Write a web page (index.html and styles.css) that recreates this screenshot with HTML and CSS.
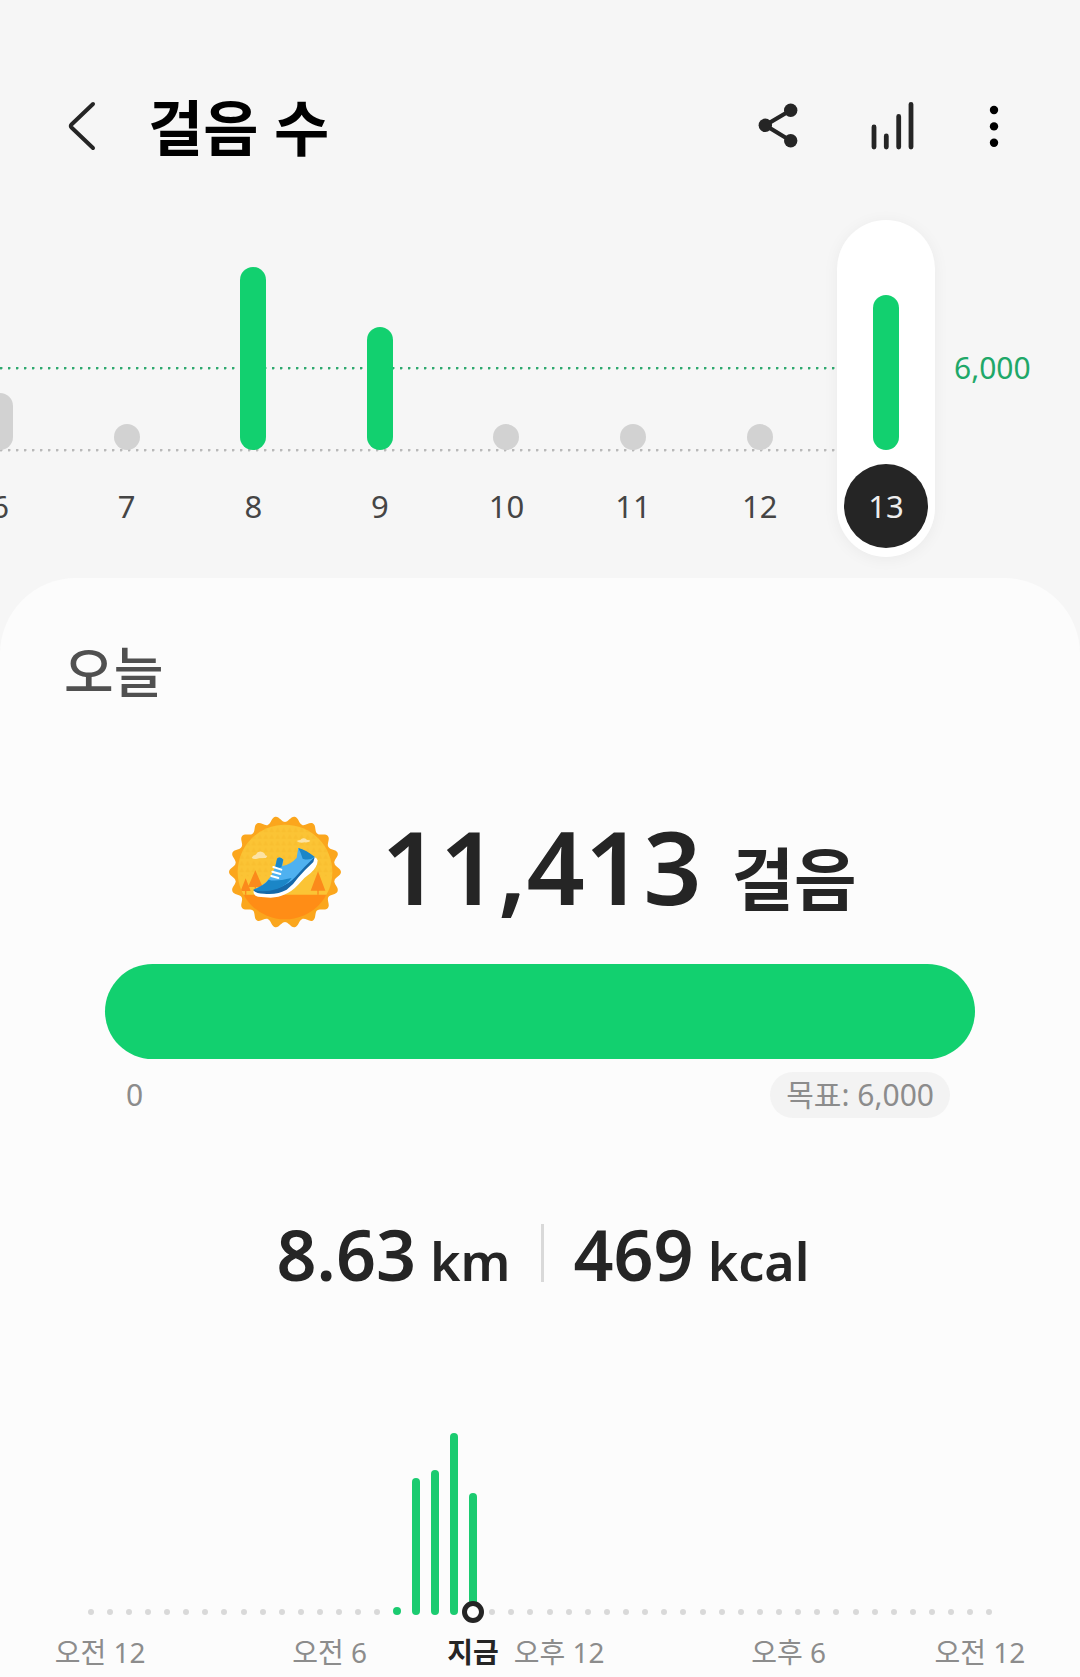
FILE: index.html
```html
<!DOCTYPE html>
<html lang="ko">
<head>
<meta charset="utf-8">
<meta name="viewport" content="width=device-width, initial-scale=1">
<title>걸음 수</title>
<link rel="stylesheet" href="styles.css">
</head>
<body>
<header class="topbar">
  <button class="icon-btn" type="button" aria-label="뒤로">
    <svg width="64" height="64" viewBox="0 0 64 64" fill="none" stroke="#252525" stroke-width="4" stroke-linecap="round" stroke-linejoin="round"><path d="M43 10 21.500 30.500Q20 32 21.500 33.500L43 54"/></svg>
  </button>
  <h1 class="title">걸음 수</h1>
  <nav class="actions">
    <button class="icon-btn" type="button" aria-label="공유">
      <svg width="64" height="64" viewBox="0 0 64 64" fill="#252525"><path d="M46.700 16.300 21.300 31.300 46.700 46.700" fill="none" stroke="#252525" stroke-width="4.200"/><circle cx="46.700" cy="16.300" r="6.700"/><circle cx="21.300" cy="31.300" r="6.700"/><circle cx="46.700" cy="46.700" r="6.700"/></svg>
    </button>
    <button class="icon-btn" type="button" aria-label="통계">
      <svg width="64" height="64" viewBox="0 0 64 64" fill="none" stroke="#252525" stroke-width="4.800" stroke-linecap="round"><path d="M16 33v20M28.300 42v11M40.700 22.500V53M53 10.300V53"/></svg>
    </button>
    <button class="icon-btn narrow" type="button" aria-label="더보기">
      <svg width="44" height="64" viewBox="0 0 44 64"><circle cx="22" cy="16" r="4.200"/><circle cx="22" cy="32.400" r="4.200"/><circle cx="22" cy="48.700" r="4.200"/></svg>
    </button>
  </nav>
</header>

<section class="week" aria-label="일별 걸음 수">
  <div class="strip">
    <div class="guide target"></div>
    <div class="guide base"></div>
    <ol class="days">
      <li class="day"><div class="plot"><span class="bar" style="height:57px"></span></div><span class="date">6</span></li>
      <li class="day"><div class="plot"><span class="bar" style="height:26px"></span></div><span class="date">7</span></li>
      <li class="day"><div class="plot"><span class="bar met" style="height:183px"></span></div><span class="date">8</span></li>
      <li class="day"><div class="plot"><span class="bar met" style="height:123px"></span></div><span class="date">9</span></li>
      <li class="day"><div class="plot"><span class="bar" style="height:26px"></span></div><span class="date">10</span></li>
      <li class="day"><div class="plot"><span class="bar" style="height:26px"></span></div><span class="date">11</span></li>
      <li class="day"><div class="plot"><span class="bar" style="height:26px"></span></div><span class="date">12</span></li>
      <li class="day selected"><div class="plot"><span class="bar met" style="height:155px"></span></div><span class="date">13</span></li>
    </ol>
  </div>
  <span class="target-label">6,000</span>
</section>

<main class="card">
  <h2 class="today">오늘</h2>

  <div class="steps">
    <svg class="badge" viewBox="61 49 336 336" role="img" aria-label="목표 달성">
      <defs>
        <path id="tooth" d="M-9-40V-49.200C-5-49.900-4-56 0-56C4-56 5-49.900 9-49.200V-40Z"/>
        <pattern id="tri" width="18" height="20" patternUnits="userSpaceOnUse"><path d="M9 2 17 18H1Z" fill="#f8b92c" opacity=".5"/></pattern>
        <clipPath id="disc"><circle cx="229" cy="217" r="142"/></clipPath>
      </defs>
      <g transform="translate(229 217) scale(3)" fill="#fba61d">
        <circle r="49"/>
        <use href="#tooth" transform="rotate(10)"/><use href="#tooth" transform="rotate(30)"/><use href="#tooth" transform="rotate(50)"/>
        <use href="#tooth" transform="rotate(70)"/><use href="#tooth" transform="rotate(90)"/><use href="#tooth" transform="rotate(110)"/>
        <use href="#tooth" transform="rotate(130)"/><use href="#tooth" transform="rotate(150)"/><use href="#tooth" transform="rotate(170)"/>
        <use href="#tooth" transform="rotate(190)"/><use href="#tooth" transform="rotate(210)"/><use href="#tooth" transform="rotate(230)"/>
        <use href="#tooth" transform="rotate(250)"/><use href="#tooth" transform="rotate(270)"/><use href="#tooth" transform="rotate(290)"/>
        <use href="#tooth" transform="rotate(310)"/><use href="#tooth" transform="rotate(330)"/><use href="#tooth" transform="rotate(350)"/>
      </g>
      <g clip-path="url(#disc)">
        <path fill="#fbc435" d="M80 70h300v220H80z"/>
        <path fill="url(#tri)" d="M80 70h300v160H80z"/>
        <path fill="#ff8d16" d="M80 285h300v80H80z"/>
        <path fill="#fb8a1b" d="M140 212 162 262H142V285H138V262H118ZM111 236 126 274H113V285H109V274H96ZM328 215 350 273H330V285H326V273H306Z"/>
      </g>
      <g fill="#fce3a4"><path d="M129 175q3-9 12-10 6-11 17-9 10 2 12 11l6 2-4 6-20 1-10 2q-8 1-13-3z"/><path d="M264 124q6-3 11-3 4-6 11-5 6 1 9 5 8-1 10 3-5 5-17 4-16 3-24-4z"/></g>
      <path fill="#fff" d="M134 275Q134 288 148 291L186 294Q212 292 226 285Q248 278 270 254Q285 234 306 220Q326 203 327 182Q323 171 314 173L240 250Z"/>
      <path fill="#1669a9" d="M134 271Q139 281 166 282Q206 286 234 270Q254 255 268 234Q290 209 314 187L318 173Z"/>
      <path fill="#4fb1f0" d="M134 270Q178 256 196 211Q202 190 206 175Q215 170 224 180L221 199Q246 195 264 174Q266 160 269 145Q291 153 318 172Q285 203 260 232Q240 254 210 264Q170 277 134 270Z"/>
      <path fill="#1b86c7" d="M134 270Q165 259 180 240Q198 247 249 235Q235 256 207 267Q165 281 134 270ZM205 177Q214 169 224 180L218 203L199 207ZM269 145Q291 150 318 172Q302 184 282 177Q278 162 269 145Z"/>
      <path fill="none" stroke="#fff" stroke-width="6" stroke-linecap="round" d="M194 202 218 210M191 216 215 223M188 229 209 235"/>
    </svg>
    <p class="count"><strong>11,413</strong> <span>걸음</span></p>
  </div>

  <div class="progress" role="progressbar" aria-label="목표 진행률" aria-valuemin="0" aria-valuemax="6000" aria-valuenow="6000"></div>
  <div class="scale"><span>0</span><span class="goal">목표: 6,000</span></div>

  <div class="metrics">
    <p class="metric"><strong>8.63</strong><span>km</span></p>
    <i class="divider"></i>
    <p class="metric"><strong>469</strong><span>kcal</span></p>
  </div>

  <div class="hours" aria-label="시간별 걸음 수">
    <i></i><i></i><i></i><i></i><i></i><i></i><i></i><i></i>
    <i></i><i></i><i></i><i></i><i></i><i></i><i></i><i></i>
    <i class="on" style="height:8px"></i><i class="on" style="height:137px"></i><i class="on" style="height:145px"></i><i class="on" style="height:182px"></i><i class="on now" style="height:122px"></i><i></i><i></i><i></i>
    <i></i><i></i><i></i><i></i><i></i><i></i><i></i><i></i>
    <i></i><i></i><i></i><i></i><i></i><i></i><i></i><i></i>
    <i></i><i></i><i></i><i></i><i></i><i></i><i></i><i></i>
  </div>
  <div class="axis">
    <span class="t0">오전 12</span><span class="t6">오전 6</span><b class="t-now">지금</b><span class="t12">오후 12</span><span class="t18">오후 6</span><span class="t24">오전 12</span>
  </div>
</main>
</body>
</html>
```
FILE: styles.css
```css
*, *::after { box-sizing: border-box; }

body {
  margin: 0;
  background: #f6f6f6;
  color: #252525;
  font-family: "Noto Sans", "Noto Sans CJK KR", sans-serif;
}

h1, h2, p, ol { margin: 0; padding: 0; }

/* Top bar */
.topbar {
  display: flex;
  align-items: center;
  padding: 78px 64px 0 50px;
  height: 174px;
}

.icon-btn {
  width: 64px;
  height: 64px;
  padding: 0;
  border: 0;
  background: none;
}
.icon-btn.narrow { width: 44px; }
.icon-btn svg { display: block; }

.title {
  flex: 1;
  padding-top: 4px;
  margin-left: 34px;
  color: #000;
  font-size: 60px;
  line-height: 72px;
  font-weight: 700;
}

.actions { display: flex; gap: 50px; }

/* Daily strip */
.week {
  display: flex;
  padding-top: 46px;
  overflow: hidden;
  height: 404px;
}

.strip { position: relative; flex: 1; }

.guide {
  position: absolute;
  left: 0;
  right: 60px;
  height: 3px;
  background-size: 8px 3px;
}
.target { top: 147px; background-image: radial-gradient(circle at 1px 1px, #2fa96f 1px, transparent 2px); }
.base { top: 229px; background-image: radial-gradient(circle at 1px 1px, #b9b9b9 1px, transparent 2px); }

.days {
  position: relative;
  display: flex;
  margin-left: -6.667%;
  list-style: none;
}

.day {
  flex: 1;
  display: flex;
  flex-direction: column;
  align-items: center;
  height: 337px;
}

.plot {
  display: flex;
  align-items: flex-end;
  justify-content: center;
  width: 98px;
  height: 230px;
}

.bar { width: 26px; border-radius: 13px; background: #d2d2d2; }
.bar.met { background: #12d06f; }

.date {
  width: 84px;
  margin-top: 14px;
  border-radius: 42px;
  color: #454545;
  font-size: 31px;
  line-height: 84px;
  text-align: center;
}

.selected {
  flex: 0 0 98px;
  margin: 0 14px;
  border-radius: 49px;
  background: #fff;
  box-shadow: 0 2px 16px rgba(0, 0, 0, 0.05);
}
.selected .date { background: #252525; color: #eee; }

.target-label {
  width: 131px;
  margin-top: 128px;
  padding-left: 5px;
  color: #1fa869;
  font-size: 30px;
  line-height: 40px;
}

/* Today card */
.card {
  padding: 64px 0 5px;
  border-radius: 76px 76px 0 0;
  background: #fcfcfc;
}

.today {
  padding: 0 64px;
  color: #505050;
  font-size: 54px;
  line-height: 60px;
  font-weight: 500;
}

.steps {
  display: flex;
  align-items: center;
  justify-content: center;
  gap: 40px;
  margin-top: 110px;
  padding-left: 6px;
  height: 120px;
}

.badge { width: 112px; height: 112px; }

.count {
  display: flex;
  align-items: baseline;
  gap: 30px;
  line-height: 120px;
  font-weight: 600;
}
.count strong { font-size: 102px; font-weight: 600; }
.count span { font-size: 68px; }

.progress {
  height: 95px;
  margin: 32px 105px 0;
  border-radius: 48px;
  background: #12d06f;
}

.scale {
  display: flex;
  justify-content: space-between;
  margin: 13px 130px 0 126px;
  color: #8c8c8c;
  font-size: 30px;
  line-height: 46px;
}
.goal { padding: 0 16px; border-radius: 23px; background: #f3f3f3; }

.metrics {
  display: flex;
  align-items: center;
  justify-content: center;
  gap: 30px;
  margin-top: 95px;
  padding-left: 6px;
  height: 80px;
}

.metric {
  display: flex;
  align-items: baseline;
  gap: 14px;
  padding-top: 8px;
  line-height: 80px;
  font-weight: 600;
}
.metric strong { font-size: 70px; font-weight: 600; }
.metric span { font-size: 52px; }

.divider { width: 3px; height: 58px; background: #d9d9d9; }

/* Half-hour chart */
.hours, .axis {
  display: grid;
  grid-template-columns: repeat(48, minmax(0, 1fr));
  padding: 0 81px;
}

.hours {
  align-items: end;
  justify-items: center;
  height: 182px;
  margin-top: 140px;
}
.hours i { width: 6px; height: 6px; border-radius: 4px; background: #d9d9d9; }
.hours .on { width: 8px; background: #1bcb70; }

.now { position: relative; }
.now::after {
  content: "";
  position: absolute;
  left: -7px;
  bottom: -8px;
  width: 22px;
  height: 22px;
  border: 5px solid #252525;
  border-radius: 50%;
  background: #fff;
}

.axis {
  margin-top: 17px;
  color: #8c8c8c;
  font-size: 28px;
  line-height: 40px;
  white-space: nowrap;
}
.axis > * { grid-row: 1; justify-self: center; }
.t0 { grid-column: 1 / 3; }
.t6 { grid-column: 13 / 15; }
.t-now { grid-column: 21; color: #252525; }
.t12 { grid-column: 25 / 27; }
.t18 { grid-column: 37 / 39; }
.t24 { grid-column: 47 / 49; }
```
